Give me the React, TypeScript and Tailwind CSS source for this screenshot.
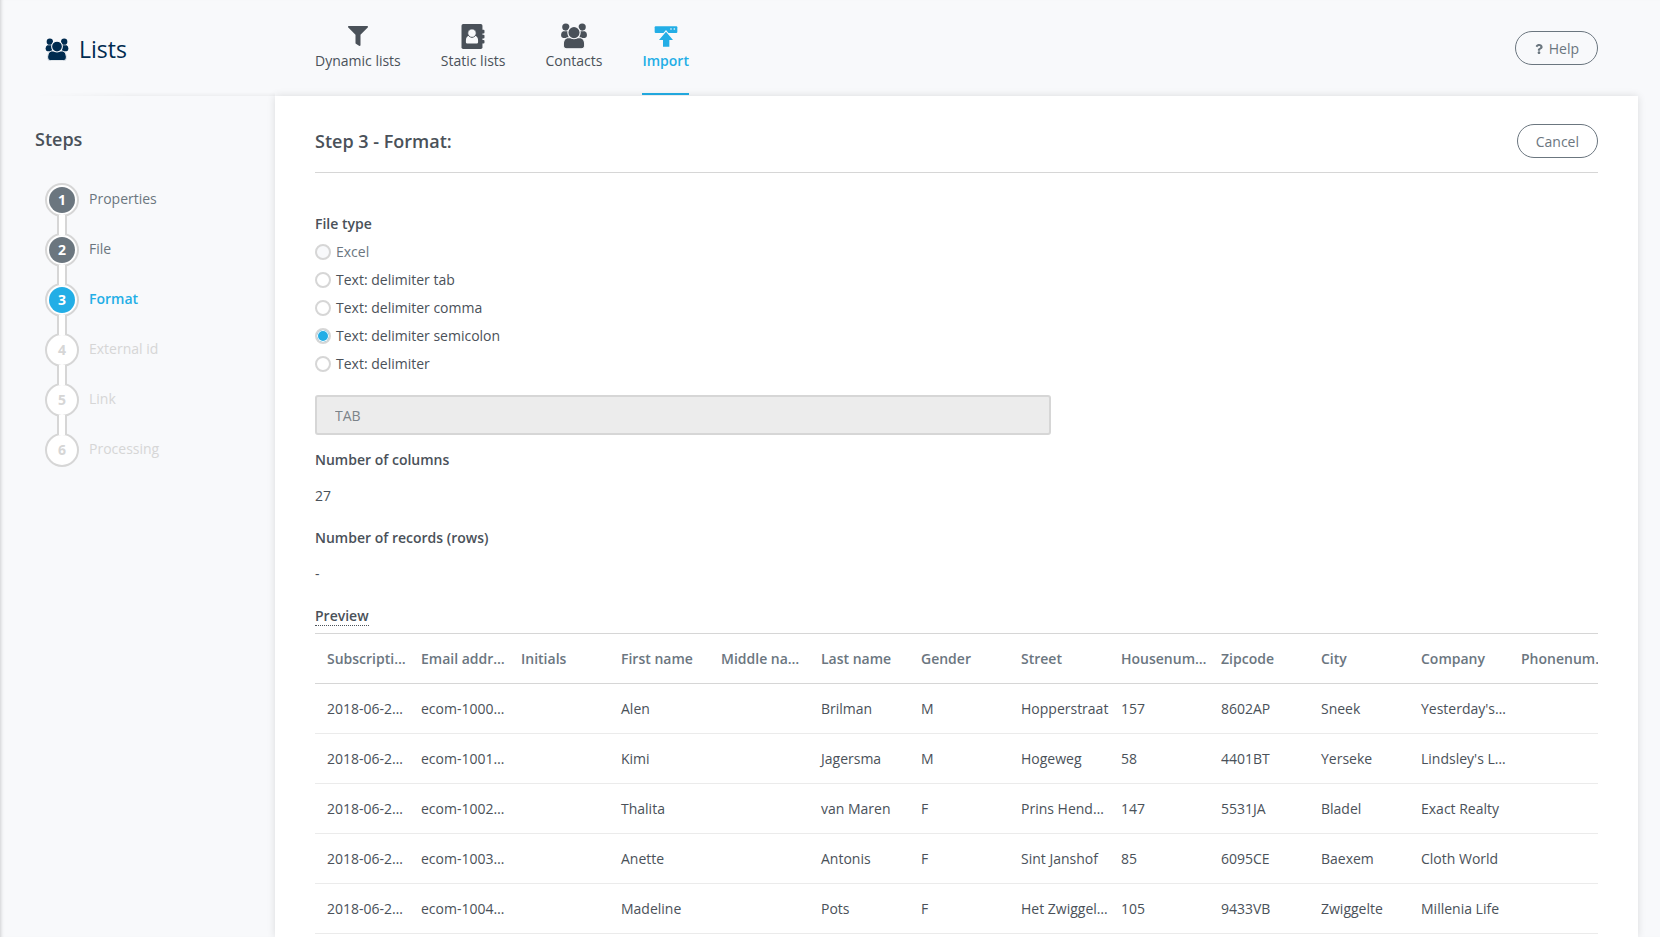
import { useState } from 'react'
import type { ReactNode } from 'react'
import { FaFilter, FaQuestion } from 'react-icons/fa'

const steps = ['Properties', 'File', 'Format', 'External id', 'Link', 'Processing']
const currentStep = 2

const fileTypes = [
  { id: 'excel', label: 'Excel', disabled: true },
  { id: 'tab', label: 'Text: delimiter tab' },
  { id: 'comma', label: 'Text: delimiter comma' },
  { id: 'semicolon', label: 'Text: delimiter semicolon' },
  { id: 'custom', label: 'Text: delimiter' },
]

const columns = [
  'Subscripti…', 'Email addr…', 'Initials', 'First name', 'Middle na…', 'Last name', 'Gender',
  'Street', 'Housenum…', 'Zipcode', 'City', 'Company', 'Phonenum…',
]

const rows = [
  ['2018-06-2…', 'ecom-1000…', '', 'Alen', '', 'Brilman', 'M', 'Hopperstraat', '157', '8602AP', 'Sneek', "Yesterday's…", ''],
  ['2018-06-2…', 'ecom-1001…', '', 'Kimi', '', 'Jagersma', 'M', 'Hogeweg', '58', '4401BT', 'Yerseke', "Lindsley's L…", ''],
  ['2018-06-2…', 'ecom-1002…', '', 'Thalita', '', 'van Maren', 'F', 'Prins Hend…', '147', '5531JA', 'Bladel', 'Exact Realty', ''],
  ['2018-06-2…', 'ecom-1003…', '', 'Anette', '', 'Antonis', 'F', 'Sint Janshof', '85', '6095CE', 'Baexem', 'Cloth World', ''],
  ['2018-06-2…', 'ecom-1004…', '', 'Madeline', '', 'Pots', 'F', 'Het Zwiggel…', '105', '9433VB', 'Zwiggelte', 'Millenia Life', ''],
]

function GroupIcon({ className }: { className?: string }) {
  return (
    <svg viewBox="0 0 80 76" className={className} fill="currentColor" aria-hidden="true">
      <circle cx="16" cy="12" r="10.5" />
      <circle cx="64" cy="12" r="10.5" />
      <path d="M8 24h16v20H8q-6-1-6-9t6-11z" />
      <path d="M72 24H56v20h16q6-1 6-9t-6-11z" />
      <path d="M20 43h40q11 4 11 18v5q0 9-9 9H18q-9 0-9-9v-5q0-14 11-18z" stroke="#f8f9fb" strokeWidth="3" />
      <circle cx="40" cy="28" r="18" stroke="#f8f9fb" strokeWidth="3.5" />
    </svg>
  )
}

function AddressBookIcon() {
  return (
    <svg viewBox="0 0 70 74" className="h-[25px] w-6" fill="currentColor" aria-hidden="true">
      <rect x="1" y="0" width="62" height="74" rx="5" />
      <rect x="60" y="17" width="9" height="11" rx="3" />
      <rect x="60" y="32" width="9" height="11" rx="3" />
      <rect x="60" y="47" width="9" height="11" rx="3" />
      <path d="M22 35q-8 3-8 14v5q0 4 4 4h28q4 0 4-4v-5q0-11-8-14l-10 6z" fill="#f8f9fb" />
      <circle cx="32" cy="27" r="12.5" fill="#f8f9fb" stroke="#4a5159" strokeWidth="2.5" />
    </svg>
  )
}

function ImportIcon() {
  return (
    <svg viewBox="0 0 70 63" className="h-[21px] w-6" fill="currentColor" aria-hidden="true">
      <rect x="1" y="1" width="68" height="20" rx="3" />
      <circle cx="50" cy="9" r="2.5" fill="#f8f9fb" />
      <circle cx="60" cy="9" r="2.5" fill="#f8f9fb" />
      <path d="M35 17L56 42H45V62H26V42H14z" stroke="#f8f9fb" strokeWidth="6" paintOrder="stroke" />
    </svg>
  )
}

function NavItem({ icon, label, active }: { icon: ReactNode; label: string; active?: boolean }) {
  return (
    <a
      href="#"
      className={
        'flex h-[95px] flex-col items-center border-b-2 pt-[22px] ' +
        (active ? 'border-[#23aee6] font-semibold text-[#23aee6]' : 'border-transparent text-[#4a5159]')
      }
    >
      <span className="flex h-7 items-center">{icon}</span>
      <span className="leading-[22px]">{label}</span>
    </a>
  )
}

function StepList() {
  return (
    <ol>
      {steps.map((step, i) => (
        <li key={step} className="flex items-start gap-[10px]">
          <div className="flex flex-col items-center">
            <span className="flex size-[34px] items-center justify-center rounded-full border-2 border-[#d6d6d6] bg-white">
              <span
                className={
                  'flex size-[26px] items-center justify-center rounded-full font-bold ' +
                  (i < currentStep
                    ? 'bg-[#6b767f] text-white'
                    : i === currentStep
                      ? 'bg-[#23aee6] text-white'
                      : 'text-[#d6d6d6]')
                }
              >
                {i + 1}
              </span>
            </span>
            {i < steps.length - 1 && (
              <span className="relative -my-0.5 h-5 w-[10px] border-x-2 border-[#d6d6d6] bg-white" />
            )}
          </div>
          <span
            className={
              'leading-8 ' +
              (i < currentStep
                ? 'text-[#6b767f]'
                : i === currentStep
                  ? 'font-semibold text-[#23aee6]'
                  : 'text-[#d6d6d6]')
            }
          >
            {step}
          </span>
        </li>
      ))}
    </ol>
  )
}

function PreviewTable() {
  return (
    <div className="overflow-hidden">
      <table className="w-[1294px] table-fixed border-y border-[#d6d6d6] text-left">
        <thead>
          <tr className="h-[50px] border-b border-[#d6d6d6] text-[#6b767f]">
            {columns.map((name, i) => (
              <th key={name} className={'overflow-hidden pl-3 font-semibold whitespace-nowrap ' + (i === 0 ? 'w-[94px]' : 'w-[100px]')}>
                {name}
              </th>
            ))}
          </tr>
        </thead>
        <tbody>
          {rows.map((row) => (
            <tr key={row[1]} className="h-[50px] border-b border-[#ebebeb]">
              {row.map((cell, i) => (
                <td key={i} className="overflow-hidden pl-3 whitespace-nowrap">{cell}</td>
              ))}
            </tr>
          ))}
        </tbody>
      </table>
    </div>
  )
}

export default function App() {
  const [fileType, setFileType] = useState('semicolon')

  return (
    <div className="flex min-h-screen flex-col bg-[#f8f9fb] font-['Open_Sans',sans-serif] text-sm text-[#4a5159] shadow-[inset_4px_0_4px_-4px_rgba(0,0,0,0.25)]">
      <header className="flex h-24 pr-[62px] pl-[35px]">
        <div className="flex w-[240px] flex-col">
          <div className="flex flex-1 items-center gap-[10px] pt-[6px] pl-[10px] text-[23px] text-[#002b4f]">
            <GroupIcon className="h-[23px] w-6" />
            <h1 className="font-medium">Lists</h1>
          </div>
          <div className="h-1 bg-linear-to-b from-transparent to-black/4 mask-l-from-60%" />
        </div>
        <nav className="flex flex-1 gap-10 pl-10">
          <NavItem icon={<FaFilter className="size-5" />} label="Dynamic lists" />
          <NavItem icon={<AddressBookIcon />} label="Static lists" />
          <NavItem icon={<GroupIcon className="h-[26px] w-7" />} label="Contacts" />
          <NavItem icon={<ImportIcon />} label="Import" active />
        </nav>
        <button className="flex h-[34px] items-center gap-[5px] self-center rounded-full border border-[#6b767f] px-[18px] pt-0.5 text-[#6b767f]">
          <FaQuestion className="size-[10px]" />
          Help
        </button>
      </header>

      <div className="flex flex-1">
        <aside className="w-[275px] pt-[29px] pl-[35px]">
          <h2 className="text-lg leading-7 font-semibold">Steps</h2>
          <div className="pt-[30px] pl-[10px]">
            <StepList />
          </div>
        </aside>

        <main className="mr-[22px] min-w-0 flex-1 bg-white px-10 pt-7 shadow-[0_0_8px_rgba(0,0,0,0.12)]">
          <div className="flex items-start justify-between border-b border-[#d6d6d6] pb-[14px]">
            <h2 className="text-lg leading-[34px] font-semibold">Step 3 - Format:</h2>
            <button className="h-[34px] rounded-full border border-[#6b767f] px-[18px] pt-0.5 text-[#6b767f]">Cancel</button>
          </div>

          <form className="pt-[37px] leading-7">
            <fieldset>
              <legend className="font-semibold">File type</legend>
              {fileTypes.map(({ id, label, disabled }) => (
                <label key={id} className={'flex items-center gap-[5px] ' + (disabled ? 'text-[#6b767f]' : '')}>
                  <input
                    type="radio"
                    name="file-type"
                    value={id}
                    checked={fileType === id}
                    disabled={disabled}
                    onChange={() => setFileType(id)}
                    className="size-4 appearance-none rounded-full border-2 border-[#d6d6d6] bg-white checked:bg-[#23aee6] checked:shadow-[inset_0_0_0_1px_white] disabled:bg-[#f8f9fb]"
                  />
                  {label}
                </label>
              ))}
            </fieldset>
            <div className="mt-[17px] mb-[11px] grid grid-cols-12 gap-[30px]">
              <input
                type="text"
                aria-label="Delimiter"
                defaultValue="TAB"
                disabled
                className="col-span-7 h-10 rounded-[3px] border-2 border-[#d6d6d6] bg-[#ececec] px-[18px] text-[#7b8389]"
              />
            </div>
          </form>

          <dl className="leading-7">
            <dt className="mb-2 font-semibold">Number of columns</dt>
            <dd className="mb-[14px]">27</dd>
            <dt className="mb-2 font-semibold">Number of records (rows)</dt>
            <dd className="mb-[14px]">-</dd>
          </dl>

          <h3 className="mb-[3px] leading-7 font-semibold">
            <span className="border-b border-dotted border-[#4a5159]">Preview</span>
          </h3>
          <PreviewTable />
        </main>
      </div>
    </div>
  )
}
